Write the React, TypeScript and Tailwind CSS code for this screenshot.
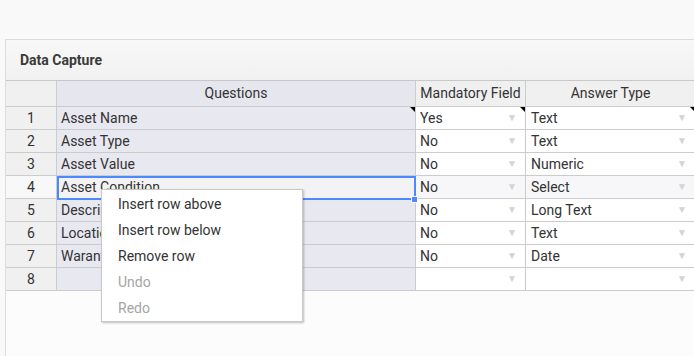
import React from "react";

const rows = [
  { q: "Asset Name", m: "Yes", a: "Text" },
  { q: "Asset Type", m: "No", a: "Text" },
  { q: "Asset Value", m: "No", a: "Numeric" },
  { q: "Asset Condition", m: "No", a: "Select" },
  { q: "Description", m: "No", a: "Long Text" },
  { q: "Location", m: "No", a: "Text" },
  { q: "Waranty", m: "No", a: "Date" },
  { q: "", m: "", a: "" },
];

function Corner() {
  return (
    <span className="absolute right-0 top-0 h-0 w-0 border-l-[5px] border-t-[5px] border-l-transparent border-t-black" />
  );
}

function Arrow({ right }: { right: string }) {
  return (
    <span className={`absolute top-1/2 -translate-y-1/2 text-[10px] leading-none text-[#d4d4d4] ${right}`}>▼</span>
  );
}

export default function App() {
  return (
    <div
      className="h-[356px] w-[694px] overflow-hidden bg-[#f9f9f9] pl-[5px] pt-[39px] text-[14px] text-[#333]"
      style={{ fontFamily: "Roboto, 'Liberation Sans', sans-serif" }}
    >
      <div className="relative h-full w-[700px] border-l border-t border-[#dcdcdc] bg-[#fcfcfc]">
        <div className="flex h-[40px] items-center bg-gradient-to-b from-[#f8f8f8] to-[#f1f1f1] pl-[14px] text-[14px] font-bold text-[#3a3a3a]">
          Data Capture
        </div>
        <div className="grid grid-cols-[51px_359px_110px_170px] border-t border-[#c8c8c8]">
          <div className="h-[26px] border-b border-r border-[#ccc] bg-[#f0f0f0]" />
          <div className="flex h-[26px] items-center justify-center border-b border-r border-[#ccc] bg-[#e6e6ee]">Questions</div>
          <div className="flex h-[26px] items-center justify-center border-b border-r border-[#ccc] bg-[#f0f0f0]">Mandatory Field</div>
          <div className="flex h-[26px] items-center justify-center border-b border-r border-[#ccc] bg-[#f0f0f0]">Answer Type</div>
          {rows.map((r, i) => {
            const cur = i === 3;
            return (
              <React.Fragment key={i}>
                <div className={`flex h-[23px] items-center justify-center border-b border-r border-[#ccc] ${cur ? "bg-[#f8f8f8]" : "bg-[#f0f0f0]"}`}>
                  {i + 1}
                </div>
                <div className={`relative flex h-[23px] items-center border-b border-r border-[#ccc] pl-[4px] ${cur ? "bg-[#f3f3f6]" : "bg-[#e8e8f0]"}`}>
                  {r.q}
                  {i === 0 && <Corner />}
                </div>
                <div className={`relative flex h-[23px] items-center border-b border-r border-[#ccc] pl-[4px] ${cur ? "bg-[#f7f7f9]" : "bg-white"}`}>
                  {r.m}
                  <Arrow right="right-[8px]" />
                  {i === 0 && <Corner />}
                </div>
                <div className={`relative flex h-[23px] items-center border-b border-r border-[#ccc] pl-[5px] ${cur ? "bg-[#f7f7f9]" : "bg-white"}`}>
                  {r.a}
                  <Arrow right="right-[8px]" />
                  {i === 0 && <Corner />}
                </div>
              </React.Fragment>
            );
          })}
        </div>

        {/* selection border */}
        <div className="pointer-events-none absolute left-[51px] top-[136px] h-[24px] w-[359px] border-2 border-[#4b89ff]" />
        <div className="absolute left-[405px] top-[156px] h-[7px] w-[7px] border border-white bg-[#4b89ff]" />

        {/* context menu */}
        <div className="absolute left-[95px] top-[149px] w-[202px] border border-[#c9c9c9] bg-white pt-[1px] shadow-[1px_1px_2px_rgba(0,0,0,0.25)]">
          {[
            { t: "Insert row above", d: false },
            { t: "Insert row below", d: false },
            { t: "Remove row", d: false },
            { t: "Undo", d: true },
            { t: "Redo", d: true },
          ].map((it) => (
            <div key={it.t} className={`flex h-[26px] items-center pl-[16px] ${it.d ? "text-[#a5a5a5]" : "text-[#333]"}`}>
              {it.t}
            </div>
          ))}
        </div>
      </div>
    </div>
  );
}
